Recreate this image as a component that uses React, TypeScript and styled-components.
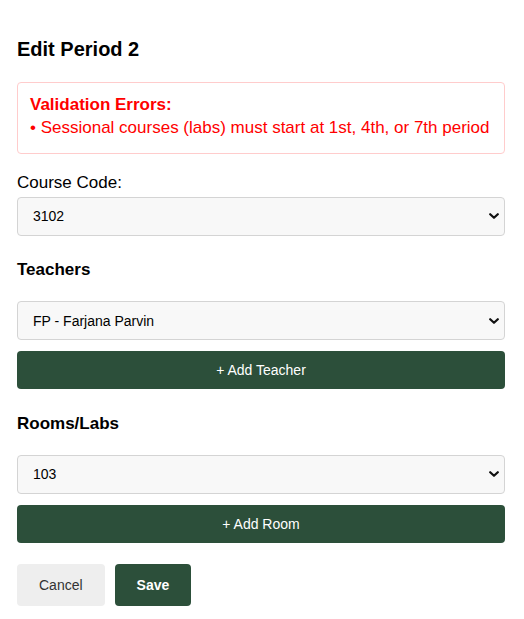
import React from "react";
import styled, { createGlobalStyle } from "styled-components";

const Global = createGlobalStyle`
  html, body { margin: 0; padding: 0; background: #ffffff; }
  body { font-family: "Liberation Sans", Arial, sans-serif; color: #000; }
`;

const Panel = styled.div`
  padding: 38px 19px 20px 17px;
  display: flex;
  flex-direction: column;
`;

const Title = styled.h2`
  margin: 0 0 21px;
  font-size: 20px;
  font-weight: bold;
  line-height: 23px;
`;

const ErrorBox = styled.div`
  border: 1px solid #ffcccc;
  border-radius: 4px;
  padding: 12px 10px 16px 12px;
  color: #ff0000;
  font-size: 17px;
  line-height: 19.5px;
  margin-bottom: 19px;
  white-space: nowrap;
`;

const ErrorTitle = styled.div`
  font-weight: bold;
  margin-bottom: 3px;
`;

const Label = styled.label`
  display: block;
  font-size: 17px;
  line-height: 19.5px;
  margin-bottom: 4px;
`;

const SelectWrap = styled.div<{ $gap?: number }>`
  position: relative;
  margin-bottom: ${(p) => p.$gap ?? 0}px;
`;

const Select = styled.select`
  display: block;
  width: 100%;
  height: 39px;
  padding: 0 30px 0 15px;
  appearance: none;
  -webkit-appearance: none;
  font-family: "Liberation Sans", Arial, sans-serif;
  font-size: 14px;
  color: #000;
  background: #f8f8f8;
  border: 1px solid #d4d4d4;
  border-radius: 4px;
  margin: 0;
  box-sizing: border-box;
`;

const Chevron = styled.svg`
  position: absolute;
  right: 6px;
  top: 50%;
  width: 10px;
  height: 6px;
  margin-top: -3px;
  pointer-events: none;
`;

const SectionTitle = styled.h4<{ $top: number; $bottom: number }>`
  margin: ${(p) => p.$top}px 0 ${(p) => p.$bottom}px;
  font-size: 17px;
  font-weight: bold;
  line-height: 19.5px;
`;

const AddButton = styled.button`
  width: 100%;
  height: 38px;
  background: #2c4f3a;
  color: #ffffff;
  border: none;
  border-radius: 4px;
  font-family: "Liberation Sans", Arial, sans-serif;
  font-size: 14px;
`;

const Actions = styled.div`
  display: flex;
  gap: 10px;
  margin-top: 21px;
`;

const ActionButton = styled.button<{ $primary?: boolean }>`
  height: 42px;
  padding: 0 22px;
  border: none;
  border-radius: 4px;
  font-family: "Liberation Sans", Arial, sans-serif;
  font-size: 14px;
  font-weight: ${(p) => (p.$primary ? "bold" : "normal")};
  background: ${(p) => (p.$primary ? "#2c4f3a" : "#eeeeee")};
  color: ${(p) => (p.$primary ? "#ffffff" : "#333333")};
`;

function Dropdown({ value, label, gap }: { value: string; label: string; gap?: number }) {
  return (
    <SelectWrap $gap={gap}>
      <Select defaultValue={value}>
        <option value={value}>{label}</option>
      </Select>
      <Chevron viewBox="0 0 10 6">
        <path d="M1.2 1.2 L5 4.8 L8.8 1.2" fill="none" stroke="#111" strokeWidth="2.2" strokeLinecap="round" strokeLinejoin="round" />
      </Chevron>
    </SelectWrap>
  );
}

export default function App() {
  return (
    <>
      <Global />
      <Panel>
        <Title>Edit Period 2</Title>
        <ErrorBox>
          <ErrorTitle>Validation Errors:</ErrorTitle>
          <div>• Sessional courses (labs) must start at 1st, 4th, or 7th period</div>
        </ErrorBox>
        <Label>Course Code:</Label>
        <Dropdown value="3102" label="3102" />
        <SectionTitle $top={24} $bottom={22}>Teachers</SectionTitle>
        <Dropdown value="FP" label="FP - Farjana Parvin" gap={11} />
        <AddButton>+ Add Teacher</AddButton>
        <SectionTitle $top={25} $bottom={21}>Rooms/Labs</SectionTitle>
        <Dropdown value="103" label="103" gap={11} />
        <AddButton>+ Add Room</AddButton>
        <Actions>
          <ActionButton>Cancel</ActionButton>
          <ActionButton $primary>Save</ActionButton>
        </Actions>
      </Panel>
    </>
  );
}
